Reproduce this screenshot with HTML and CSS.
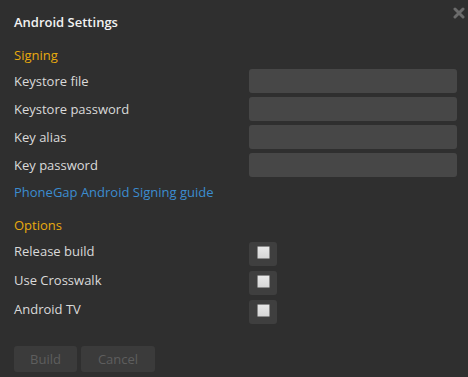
FILE: index.html
```html
<!DOCTYPE html>
<html>
<head>
    <title>Android Settings</title>
    <link rel="stylesheet" href="styles.css">
</head>
<body>
    <div class="dialog">
        <div class="dialog-header">
            <h1 class="dialog-title">Android Settings</h1>
            <span class="close-btn">
                <svg width="12" height="12" viewBox="0 0 12 12">
                    <path d="M2 2 L10 10 M10 2 L2 10" stroke="#6b6b6b" stroke-width="3" stroke-linecap="round"/>
                </svg>
            </span>
        </div>

        <h2 class="section-title">Signing</h2>
        <div class="field-list">
            <label class="field-label" for="keystoreFile">Keystore file</label>
            <input class="field-input" type="text" id="keystoreFile">
            <label class="field-label" for="keystorePass">Keystore password</label>
            <input class="field-input" type="password" id="keystorePass">
            <label class="field-label" for="keyAlias">Key alias</label>
            <input class="field-input" type="text" id="keyAlias">
            <label class="field-label" for="keyPass">Key password</label>
            <input class="field-input" type="password" id="keyPass">
        </div>
        <a class="guide-link" href="#">PhoneGap Android Signing guide</a>

        <h2 class="section-title options-title">Options</h2>
        <div class="check-list">
            <label class="field-label" for="releaseBuild">Release build</label>
            <span class="check-wrap"><input class="check" type="checkbox" id="releaseBuild"></span>
            <label class="field-label" for="crosswalk">Use Crosswalk</label>
            <span class="check-wrap"><input class="check" type="checkbox" id="crosswalk"></span>
            <label class="field-label" for="androidTv">Android TV</label>
            <span class="check-wrap"><input class="check" type="checkbox" id="androidTv"></span>
        </div>

        <div class="dialog-buttons">
            <button class="btn btn-build" disabled>Build</button>
            <button class="btn btn-cancel" disabled>Cancel</button>
        </div>
    </div>
</body>
</html>
```

FILE: styles.css
```css
body, html {
    margin: 0;
    height: 100%;
    background-color: #2f2f2f;
    font-family: "Open Sans", "Noto Sans", sans-serif;
    font-size: 13px;
    color: #dadada;
    overflow: hidden;
}

.dialog {
    padding: 0 11px 0 14px;
}

.dialog-header {
    display: flex;
    justify-content: space-between;
    align-items: flex-start;
}

.dialog-title {
    margin: 12px 0 0 0;
    font-size: 13px;
    font-weight: 600;
    line-height: 20px;
    color: #f2f2f2;
}

.close-btn {
    margin-top: 7px;
    margin-right: -8px;
    display: block;
    width: 12px;
    height: 12px;
}

.close-btn svg {
    display: block;
}

.section-title {
    margin: 13px 0 4px 0;
    font-size: 13px;
    font-weight: normal;
    line-height: 20px;
    color: #e8aa0e;
}

.field-list {
    display: grid;
    grid-template-columns: 235px 208px;
    row-gap: 4px;
    align-items: center;
}

.field-label {
    line-height: 20px;
}

.field-input {
    height: 24px;
    box-sizing: border-box;
    border: none;
    border-radius: 3px;
    background-color: #474747;
    color: #dadada;
    padding: 0 6px;
    font: inherit;
}

.guide-link {
    display: block;
    margin-top: 5px;
    line-height: 20px;
    color: #3c8dcf;
    text-decoration: none;
}

.options-title {
    margin-top: 13px;
    margin-bottom: 7px;
}

.check-list {
    display: grid;
    grid-template-columns: 235px 28px;
    row-gap: 5px;
    align-items: start;
}

.check-list .field-label {
    line-height: 18px;
}

.check-wrap {
    display: flex;
    justify-content: center;
    align-items: flex-start;
    width: 28px;
    height: 24px;
    box-sizing: border-box;
    padding-top: 4px;
    border-radius: 3px;
    background-color: #3f3f3f;
}

.check {
    appearance: none;
    margin: 0;
    width: 13px;
    height: 13px;
    box-sizing: border-box;
    border: 1px solid #8a8a8a;
    border-radius: 1px;
    background: linear-gradient(#e8e8e8, #d6d6d6);
}

.dialog-buttons {
    display: flex;
    gap: 4px;
    margin-top: 22px;
}

.btn {
    height: 26px;
    padding: 0;
    border: none;
    border-radius: 3px;
    background-color: #3b3b3b;
    color: #5e5e5e;
    font: inherit;
}

.btn-build {
    width: 63px;
}

.btn-cancel {
    width: 74px;
}
```
